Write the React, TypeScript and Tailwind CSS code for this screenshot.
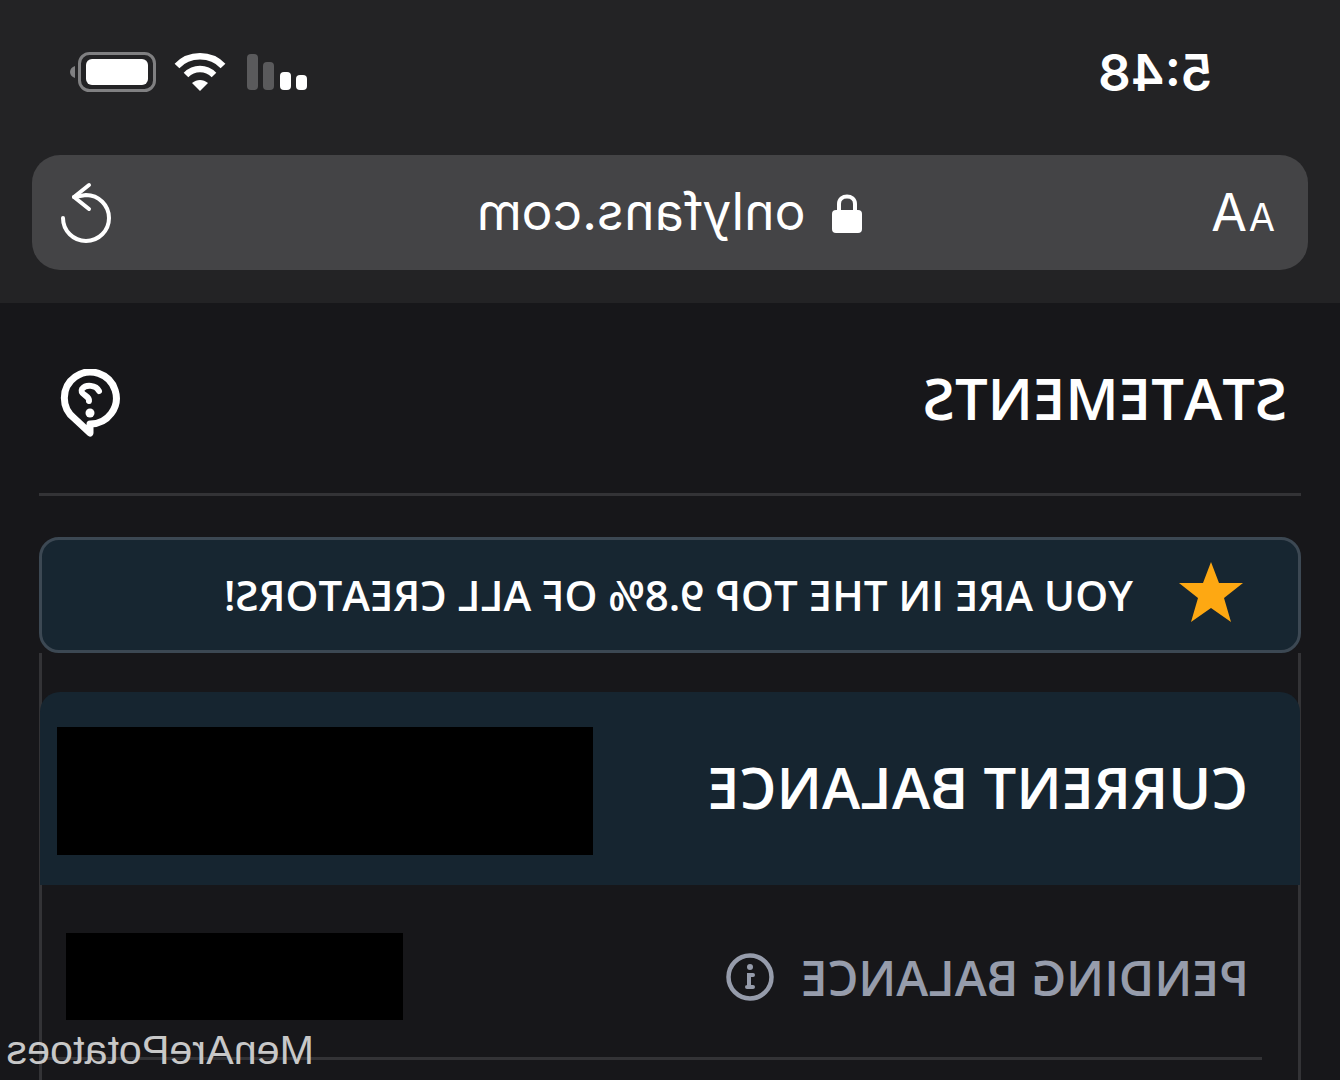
// the whole screenshot is a horizontal mirror, so it is laid out normally and flipped once at the root
function StatusIcons() {
	return (
		<div className="flex items-center">
			<svg width="60" height="40" viewBox="0 0 60 40" className="mr-[21px]">
				<rect x="0" y="23" width="11" height="15" rx="4" fill="#fff" />
				<rect x="16" y="20" width="11" height="18" rx="4" fill="#fff" />
				<rect x="33" y="10" width="11" height="28" rx="4" fill="#5a5a5c" />
				<rect x="49" y="2" width="11" height="36" rx="4" fill="#5a5a5c" />
			</svg>
			<svg width="52" height="40" viewBox="0 0 52 40" className="mr-[18px]" fill="none" stroke="#fff" strokeWidth="6.5">
				<path d="M3 14 C15 1 37 1 49 14" />
				<path d="M12 23 C20 15 32 15 40 23" />
				<path d="M26 39 L18 31 C23 27 29 27 34 31 Z" fill="#fff" stroke="none" />
			</svg>
			<svg width="86" height="42" viewBox="0 0 86 42">
				<rect x="1.5" y="2.5" width="75" height="37" rx="10" fill="none" stroke="#808082" strokeWidth="3" />
				<rect x="8" y="8" width="62" height="26" rx="6" fill="#fff" />
				<path d="M81 15 C84 16 86 18 86 21 C86 24 84 26 81 27 Z" fill="#808082" />
			</svg>
		</div>
	);
}

function ReloadIcon() {
	return (
		<svg width="56" height="64" viewBox="0 0 56 64" fill="none" stroke="#fff" strokeWidth="4" strokeLinecap="round" strokeLinejoin="round">
			<path d="M51 37 A23 23 0 1 1 28 14 L 40 16" />
			<path d="M25 4 L40 16 L25 28" />
		</svg>
	);
}

function LockIcon() {
	return (
		<svg width="30" height="40" viewBox="0 0 30 40" fill="none">
			<path d="M7 19 V11 C7 1 23 1 23 11 V19" stroke="#fff" strokeWidth="4" />
			<rect x="0" y="17" width="30" height="23" rx="4" fill="#fff" />
		</svg>
	);
}

function HelpIcon() {
	return (
		<svg width="60" height="68" viewBox="0 0 60 68" fill="none" stroke="#fff" strokeLinecap="round" strokeLinejoin="round" className="mt-[10px]">
			<path d="M30 55 A26 26 0 1 1 45 50 L30 64 Z" strokeWidth="7" />
			<path d="M21 22 C24 16 34 15 38 20 C41 26 30 26 31 32" strokeWidth="6" />
			<circle cx="30" cy="44" r="4.5" fill="#fff" stroke="none" />
		</svg>
	);
}

function InfoIcon() {
	return (
		<svg width="48" height="48" viewBox="0 0 48 48" fill="none" stroke="#969cab" strokeLinecap="round">
			<circle cx="24" cy="24" r="21.5" strokeWidth="4.5" />
			<circle cx="24" cy="14" r="3" fill="#969cab" stroke="none" />
			<path d="M21 22 H25 V33 M21 34 H27" strokeWidth="4" />
		</svg>
	);
}

export default function App() {
	return (
		<div className="relative w-[1340px] h-[1080px] overflow-hidden -scale-x-100 flex flex-col bg-[#17171a] font-['Open_Sans',sans-serif] text-white">
			{/* Browser chrome */}
			<header className="h-[303px] shrink-0 bg-[#232325] px-[32px]">
				<div className="h-[155px] flex items-center justify-between pl-[95px] pr-[38px] pb-[11px]">
					<span className="text-[51px] font-semibold font-['Inter',sans-serif] leading-none">5:48</span>
					<StatusIcons />
				</div>
				<div className="h-[115px] rounded-[28px] bg-[#444446] flex items-center pl-[35px] pr-[26px]">
					<div className="flex items-baseline justify-end gap-[2px] w-[62px] font-['Inter',sans-serif]">
						<span className="text-[38px] leading-none">A</span>
						<span className="text-[52px] leading-none">A</span>
					</div>
					<div className="flex-1 flex items-center justify-center gap-[27px] pr-[14px]">
						<LockIcon />
						<span className="text-[51.5px] leading-none font-['Inter',sans-serif] pb-[2px]">onlyfans.com</span>
					</div>
					<ReloadIcon />
				</div>
			</header>

			{/* Page */}
			<main className="flex-1 px-[39px]">
				<div className="h-[193px] flex items-center justify-between pl-[14px] pr-[21px] border-b-[3px] border-[#333336]">
					<h1 className="text-[58px] font-semibold leading-none">STATEMENTS</h1>
					<HelpIcon />
				</div>

				<div className="mt-[41px] h-[116px] rounded-[20px] border-[3px] border-[#3c4853] bg-[#172631] flex items-center pl-[55px]">
					<svg width="64" height="60" viewBox="0 0 64 60" fill="#fea812" className="mb-[6px]">
						<path d="M32 0 L40 21 L64 21 L45 36 L52 60 L32 46 L12 60 L19 36 L0 21 L24 21 Z" />
					</svg>
					<span className="ml-[46px] text-[42px] font-semibold leading-none">YOU ARE IN THE TOP 9.8% OF ALL CREATORS!</span>
				</div>

				<section className="border-x-[3px] border-[#333336] h-[430px] pt-[39px]">
					<div className="h-[193px] -mx-[2px] rounded-t-[20px] bg-[#162530] flex items-center justify-between pl-[52px] pr-[17px]">
						<span className="text-[58px] font-semibold leading-none mb-[4px]">CURRENT BALANCE</span>
						<div className="w-[536px] h-[128px] bg-black mt-[4px]" />
					</div>
					<div className="h-[175px] border-b-[3px] border-[#333336] ml-[36px] flex items-center justify-between pl-[13px] pr-[24px]">
						<div className="flex items-center gap-[27px] text-[#969cab] mt-[12px]">
							<span className="text-[48.4px] font-semibold leading-none">PENDING BALANCE</span>
							<InfoIcon />
						</div>
						<div className="w-[337px] h-[87px] bg-black mt-[11px]" />
					</div>
				</section>
			</main>

			{/* Watermark */}
			<span className="absolute left-[1026px] top-[1028px] text-[41.3px] leading-[44px] font-['Liberation_Sans',sans-serif] text-[#c8c8c8]">MenArePotatoes</span>
		</div>
	);
}
